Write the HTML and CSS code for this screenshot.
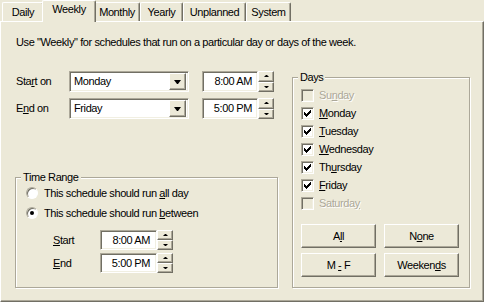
FILE: index.html
```html
<!DOCTYPE html>
<html>
<head>
<meta charset="UTF-8">
<title>Schedule - Weekly</title>
<link rel="stylesheet" href="styles.css">
</head>
<body>
    <div class="tabs">
        <div class="tab tab-daily">Daily</div>
        <div class="tab tab-weekly active">Weekly</div>
        <div class="tab tab-monthly">Monthly</div>
        <div class="tab tab-yearly">Yearly</div>
        <div class="tab tab-unplanned">Unplanned</div>
        <div class="tab tab-system">System</div>
    </div>
    <div class="panel">
        <p class="intro">Use "Weekly" for schedules that run on a particular day or days of the week.</p>
        <div class="columns">
            <div class="left">
                <div class="field-row">
                    <span class="field-label">Sta<u>r</u>t on</span>
                    <div class="combo"><span class="combo-text">Monday</span><span class="combo-btn"><i class="arrow-down"></i></span></div>
                    <div class="time">8:00 AM</div>
                    <div class="spin"><span class="spin-up"></span><span class="spin-down"></span></div>
                </div>
                <div class="field-row">
                    <span class="field-label">E<u>n</u>d on</span>
                    <div class="combo"><span class="combo-text">Friday</span><span class="combo-btn"><i class="arrow-down"></i></span></div>
                    <div class="time">5:00 PM</div>
                    <div class="spin"><span class="spin-up"></span><span class="spin-down"></span></div>
                </div>

                <div class="group range">
                    <div class="group-title">Time Range</div>
                    <div class="radio-row"><span class="radio"></span><span>This schedule should run <u>a</u>ll day</span></div>
                    <div class="radio-row"><span class="radio checked"></span><span>This schedule should run <u>b</u>etween</span></div>
                    <div class="range-row">
                        <span class="range-label"><u>S</u>tart</span>
                        <div class="time small">8:00 AM</div>
                        <div class="spin small"><span class="spin-up"></span><span class="spin-down"></span></div>
                    </div>
                    <div class="range-row">
                        <span class="range-label"><u>E</u>nd</span>
                        <div class="time small">5:00 PM</div>
                        <div class="spin small"><span class="spin-up"></span><span class="spin-down"></span></div>
                    </div>
                </div>
            </div>

            <div class="group days">
                <div class="group-title">Days</div>
                <div class="check-row disabled"><span class="check"></span><span>Su<u>n</u>day</span></div>
                <div class="check-row"><span class="check"><svg width="7" height="7" viewBox="0 0 7 7"><path d="M0 2v3h1v1h1v1h1v-1h1v-1h1v-1h1v-1h1v-3h-1v1h-1v1h-1v1h-1v1h-1v-1h-1v-1z"/></svg></span><span><u>M</u>onday</span></div>
                <div class="check-row"><span class="check"><svg width="7" height="7" viewBox="0 0 7 7"><path d="M0 2v3h1v1h1v1h1v-1h1v-1h1v-1h1v-1h1v-3h-1v1h-1v1h-1v1h-1v1h-1v-1h-1v-1z"/></svg></span><span><u>T</u>uesday</span></div>
                <div class="check-row"><span class="check"><svg width="7" height="7" viewBox="0 0 7 7"><path d="M0 2v3h1v1h1v1h1v-1h1v-1h1v-1h1v-1h1v-3h-1v1h-1v1h-1v1h-1v1h-1v-1h-1v-1z"/></svg></span><span><u>W</u>ednesday</span></div>
                <div class="check-row"><span class="check"><svg width="7" height="7" viewBox="0 0 7 7"><path d="M0 2v3h1v1h1v1h1v-1h1v-1h1v-1h1v-1h1v-3h-1v1h-1v1h-1v1h-1v1h-1v-1h-1v-1z"/></svg></span><span>Th<u>u</u>rsday</span></div>
                <div class="check-row"><span class="check"><svg width="7" height="7" viewBox="0 0 7 7"><path d="M0 2v3h1v1h1v1h1v-1h1v-1h1v-1h1v-1h1v-3h-1v1h-1v1h-1v1h-1v1h-1v-1h-1v-1z"/></svg></span><span><u>F</u>riday</span></div>
                <div class="check-row disabled"><span class="check"></span><span>Saturda<u>y</u></span></div>
                <div class="buttons">
                    <button>A<u>l</u>l</button>
                    <button>N<u>o</u>ne</button>
                    <button>M <u>-</u> F</button>
                    <button>Weeken<u>d</u>s</button>
                </div>
            </div>
        </div>
    </div>
</body>
</html>
```

FILE: styles.css
```css
body {
    margin: 0;
    width: 484px;
    height: 302px;
    overflow: hidden;
    background: #ece9d8;
    font-family: "Liberation Sans", Arial, sans-serif;
    font-size: 11px;
    line-height: 13px;
    letter-spacing: -0.4px;
    color: #000;
}
u {
    text-decoration: underline;
    text-underline-offset: 1px;
}

/* tab strip */
.tabs {
    display: flex;
    align-items: flex-end;
    height: 21px;
    padding-left: 2px;
}
.tab {
    box-sizing: border-box;
    height: 19px;
    padding-top: 3px;
    border-top: 1px solid #fff;
    border-left: 1px solid #fff;
    border-right: 1px solid #716f64;
    border-radius: 2px 2px 0 0;
    box-shadow: inset -1px 0 #aca899;
    text-align: center;
}
.tab.active {
    position: relative;
    z-index: 1;
    height: 22px;
    margin: 0 -2px -1px;
    padding-top: 2px;
    background: #ece9d8;
}
.tab-daily { width: 42px; }
.tab-weekly { width: 54px; }
.tab-monthly { width: 46px; }
.tab-yearly { width: 43px; }
.tab-unplanned { width: 63px; }
.tab-system { width: 45px; }

/* page */
.panel {
    box-sizing: border-box;
    height: 281px;
    border: 1px solid #fff;
    border-right-color: #716f64;
    border-bottom-color: #716f64;
    box-shadow: inset -1px -1px #aca899;
    padding: 14px 0 0 15px;
}
.intro {
    margin: 0;
}
.columns {
    display: flex;
    align-items: flex-start;
    gap: 11px;
    margin-top: 22px;
}
.left {
    width: 265px;
}

/* controls */
.field-row {
    display: flex;
    align-items: center;
    height: 21px;
}
.field-row + .field-row {
    margin-top: 6px;
}
.field-label {
    width: 53px;
}
.combo, .time, .check {
    box-sizing: border-box;
    border: 1px solid;
    border-color: #aca899 #fff #fff #aca899;
    box-shadow: inset 1px 1px #716f64, inset -1px -1px #f1efe2;
    background: #fff;
}
.combo {
    display: flex;
    align-items: center;
    width: 120px;
    height: 21px;
    padding: 2px;
    margin-right: 13px;
}
.combo-text {
    flex: 1;
    padding-left: 2px;
}
.combo-btn, .spin span, button {
    box-sizing: border-box;
    border: 1px solid;
    border-color: #fff #716f64 #716f64 #fff;
    box-shadow: inset -1px -1px #aca899;
    background: #ece9d8;
}
.combo-btn {
    display: flex;
    align-items: center;
    justify-content: center;
    width: 17px;
    height: 17px;
}
.arrow-down {
    width: 1px;
    height: 0;
    border-left: 3px solid transparent;
    border-right: 3px solid transparent;
    border-top: 4px solid #000;
    margin-top: 1px;
}
.time {
    width: 56px;
    height: 21px;
    padding: 3px 5px 0 0;
    text-align: right;
}
.spin {
    display: flex;
    flex-direction: column;
    width: 16px;
    height: 21px;
}
.spin span {
    flex: 1;
    display: flex;
    align-items: center;
    justify-content: center;
}
.spin span::after {
    content: "";
    width: 1px;
    height: 0;
    border-left: 2px solid transparent;
    border-right: 2px solid transparent;
}
.spin-up::after {
    border-bottom: 2px solid #000;
}
.spin-down::after {
    border-top: 2px solid #000;
}

/* group boxes */
.group {
    box-sizing: border-box;
    border: 1px solid #aca899;
    box-shadow: 1px 1px #fff, inset 1px 1px #fff;
}
.group-title {
    display: table;
    margin: -7px 0 0 5px;
    padding: 0 2px;
    background: #ece9d8;
}
.range {
    width: 263px;
    height: 111px;
    margin: 58px 0 0 -1px;
}
.radio-row {
    display: flex;
    align-items: center;
    height: 18px;
    padding-left: 10px;
}
.radio-row + .radio-row {
    margin-top: 2px;
}
.radio {
    box-sizing: border-box;
    display: flex;
    align-items: center;
    justify-content: center;
    width: 12px;
    height: 12px;
    margin-right: 6px;
    border: 1px solid;
    border-color: #aca899 #fff #fff #aca899;
    border-radius: 50%;
    box-shadow: inset 1px 1px #716f64;
    background: #fff;
}
.radio.checked::after {
    content: "";
    width: 4px;
    height: 4px;
    border-radius: 50%;
    background: #000;
}
.range-row {
    display: flex;
    align-items: center;
    height: 20px;
    padding-left: 37px;
}
.radio-row + .range-row {
    margin-top: 8px;
}
.range-row + .range-row {
    margin-top: 3px;
}
.range-label {
    width: 47px;
}
.time.small, .spin.small {
    height: 20px;
}
.time.small {
    width: 57px;
    padding-right: 6px;
}

.days {
    width: 178px;
    height: 211px;
    margin-top: 6px;
}
.days .group-title {
    margin-bottom: 2px;
}
.check-row {
    display: flex;
    align-items: center;
    height: 18px;
    padding-left: 8px;
}
.check {
    display: flex;
    align-items: center;
    justify-content: center;
    width: 13px;
    height: 13px;
    margin-right: 5px;
}
.check svg {
    display: block;
    shape-rendering: crispEdges;
}
.check-row.disabled {
    color: #aca899;
    text-shadow: 1px 1px #fff;
}
.check-row.disabled .check {
    background: #ece9d8;
}
.buttons {
    display: grid;
    grid-template-columns: 75px 75px;
    gap: 5px 8px;
    margin-top: 12px;
    padding-left: 8px;
}
button {
    height: 24px;
    padding: 0;
    font: inherit;
    letter-spacing: inherit;
    color: #000;
}
```
